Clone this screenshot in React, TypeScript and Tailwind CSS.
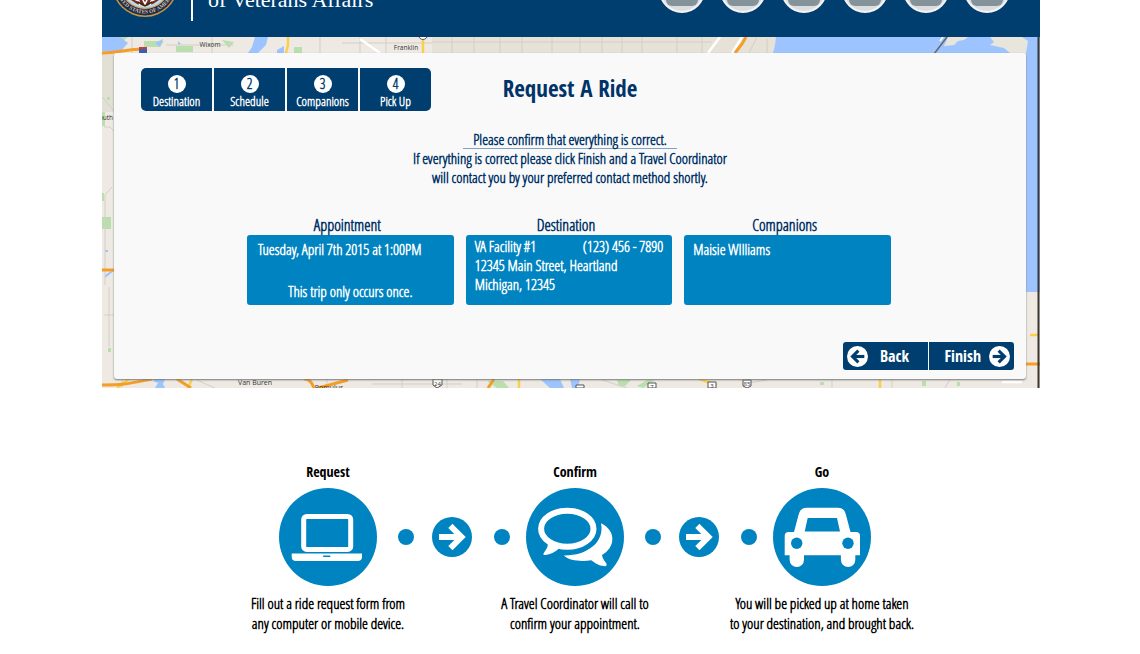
import React from "react";

const steps = ["Destination", "Schedule", "Companions", "Pick Up"];

function Arrow({ left = false, className }: { left?: boolean; className: string }) {
  return (
    <svg viewBox="0 0 40 40" className={className} aria-hidden="true">
      <circle cx="20" cy="20" r="20" fill="currentColor" />
      <g transform={left ? "rotate(180 20 20)" : undefined} className="stroke-(--arrow)" fill="none" strokeWidth="6">
        <path d="M7 20H29" strokeLinecap="butt" />
        <path d="M20.500 11L29.500 20L20.500 29" strokeLinejoin="miter" strokeLinecap="square" />
      </g>
    </svg>
  );
}

function Seal() {
  return (
    <svg viewBox="0 0 66 66" className="size-[66px] shrink-0" role="img" aria-label="Department seal">
      <defs>
        <path id="rim" d="M3.500 33A29.500 29.500 0 0 0 62.500 33" />
      </defs>
      <circle cx="33" cy="33" r="33" fill="#c8963e" />
      <circle cx="33" cy="33" r="31.5" fill="#1c2a56" />
      <circle cx="33" cy="33" r="25" fill="#d8b070" />
      <circle cx="33" cy="33" r="23.6" fill="#b9dcee" />
      <path d="M15 40l8 5 5-3 5 4 5-4 5 3 8-5-4 9-6 4-8 2-8-2-6-4z" fill="#7a2b20" />
      <path d="M22 48l5 2 1 4M44 48l-5 2-1 4M30 47l3 6 3-6" stroke="#fff" strokeWidth="1.5" fill="none" />
      <path d="M26 51l7 4 7-4" stroke="#3a2415" strokeWidth="1.5" fill="none" />
      <text fontSize="5.5" fill="#d9c08a" fontFamily="Liberation Serif, serif" fontWeight="700">
        <textPath href="#rim" startOffset="50%" textAnchor="middle">UNITED STATES OF AMERICA</textPath>
      </text>
    </svg>
  );
}

function MapBackdrop() {
  return (
    <svg viewBox="0 0 938 351" preserveAspectRatio="none" className="absolute inset-0 size-full" aria-hidden="true">
      <rect width="938" height="351" fill="#eeeae3" />
      <rect x="330" width="345" height="20" fill="#e7e2d8" />
      <rect width="12" height="75" fill="#e2dfd5" />
      <g fill="#b9dfae">
        <path d="M8 14L26 0h-8L3 12zM42 4h20l-4 6H42zM74 9h17v6H74zM120 3l12 2-5 6zM192 10h8v6h-8z" />
        <path d="M0 75h3v14H0zM5 60h3v3H5zM0 180h9v12H0zM0 156h2v8H0zM6 311h3v4H6z" />
        <path d="M385 344h16l6 7h-12zM515 343h14l-6 6h-6zM535 349l10-6h8l-12 8zM718 345h4v3h-4zM820 344h4v5h-4zM855 345h3v4h-3z" />
      </g>
      <g fill="#9ec4ff">
        <path d="M0 0h18l8 6-7 8H0zM53 6l8-4-3 8zM76 4l3 3-3 1zM153 0h13l-2 8-8 8h-10l4-6zM175 13l7-4v7h-7z" />
        <path d="M674 0h264v255l-14 9V16H671l2-8z" />
        <path d="M53 342h10l-2 5 2 4H53l3-5-5-2zM438 342h20l4 9h-14zM468 342h10l-2 9h-6zM3 238l9-6v2l-9 7zM3 213h3v2H3z" />
      </g>
      <path d="M846 0h20l-4 3-6 1-4 4-10 1zM888 0h32l6 4-2 12h-16l-6-5-14-3 4-3z" fill="#e8e5dc" />
      <path d="M832 17L845 0" stroke="#666" strokeWidth="1.5" />
      <path d="M838 4L841 0" stroke="#fff" strokeWidth="1.5" />
      <rect x="924" y="255" width="14" height="96" fill="#eeeae3" />
      <g stroke="#d3cec6" strokeWidth="1" fill="none">
        <path d="M30 0v16M64 8h68M110 0v16M218 0v16M240 6h90M258 0v16M284 0v16M330 5h280M350 0v16M372 0v16M398 0v16M420 0v16M450 0v16M478 0v16M500 0v16M520 0v16M540 0v16M575 0v16M600 0v16M655 0l-8 16M665 2v14" />
        <path d="M2 90h6l4 4M10 150L3 158v90M2 278h10M7 250v60M0 60l12 14" />
        <path d="M20 351V342M95 343l18 8M225 342v9M270 347h90M300 342v9M345 342v9M375 342v9M500 343l25 8M640 347l25-4M730 342v9M790 342v9M848 342l-5 9" />
      </g>
      <g stroke="#fff" strokeWidth="2.5" fill="none">
        <path d="M258 2l20 14M606 16l12-16M630 16l10-16M900 345h20" />
      </g>
      <g stroke="#fbce4d" strokeWidth="2.5" fill="none">
        <path d="M186 0v8l-2 8M321 3v13M15 351l12-9M90 342l-4 9M417 342v9M597 342l18 6M778 342v9M928 298h8" />
      </g>
      <g stroke="#f69d28" strokeWidth="3" fill="none">
        <path d="M0 16c18 0 20-4 45-4M644 0l-4 7-7 9M0 233h12M0 348c22 0 25-1 50-6M75 342l14 9M202 342c6 0 8 4 10 9M216 351l30-8M386 351l6-9M924 327h14" />
      </g>
      <path d="M37 10h8v6h-8z" fill="#3563ae" />
      <path d="M37 10h8v2h-8z" fill="#d73538" />
      <g fill="#fff" stroke="#555">
        <circle cx="321" cy="-2" r="4.5" />
        <path d="M331 342h9v6l-5 3-4-3zM546 346h8v5h-8zM606 345h8v6h-8zM641 343h8v6l-4 2-4-2zM474 348h8v3h-8z" />
      </g>
      <g fill="#333" fontSize="6.5" fontFamily="Open Sans, sans-serif" textAnchor="middle">
        <text x="108" y="10">Wixom</text>
        <text x="304" y="13">Franklin</text>
        <text x="153" y="348" fontSize="7">Van Buren</text>
        <text x="227" y="353" fontSize="7">Romulus</text>
        <text x="4" y="83">outh</text>
        <text x="335.500" y="349" fontSize="6">24</text>
        <text x="610" y="351" fontSize="6">3</text>
        <text x="645" y="349" fontSize="6">85</text>
        <text x="550" y="352" fontSize="6">7</text>
      </g>
      <path d="M936.500 0v351" stroke="#3a3630" strokeWidth="2" />
    </svg>
  );
}

function Stage({ title, caption, children }: { title: string; caption: string; children: React.ReactNode }) {
  return (
    <li className="flex w-[98px] shrink-0 flex-col items-center">
      <h2 className="font-['Open_Sans_Condensed',sans-serif] text-sm leading-5 font-bold">{title}</h2>
      <svg viewBox="0 0 98 98" className="mt-1.5 size-[98px]" aria-hidden="true">
        <circle cx="49" cy="49" r="49" fill="#0083c1" />
        {children}
      </svg>
      <p className="mt-[7px] text-center text-[15px] leading-5 font-bold whitespace-pre">{caption}</p>
    </li>
  );
}

function Connector() {
  return (
    <li aria-hidden="true" className="mt-[26px] flex h-[98px] w-[149px] items-center pl-[21px] text-[#0083c1] [--arrow:#fff]">
      <span className="size-4 rounded-full bg-[#0083c1]" />
      <Arrow className="mr-[22px] ml-[18px] size-10" />
      <span className="size-4 rounded-full bg-[#0083c1]" />
    </li>
  );
}

function Summary({ title, children }: { title: string; children: React.ReactNode }) {
  return (
    <section className="min-w-0 flex-1">
      <h2 className="pr-1.5 text-center text-base leading-5 font-bold">{title}</h2>
      <div className="flex h-[70px] flex-col rounded-[3px] bg-[#0083c1] px-[9px] text-[15px] leading-[19px] font-bold whitespace-nowrap text-white">
        {children}
      </div>
    </section>
  );
}

export default function App() {
  return (
    <div className="min-h-screen bg-white pl-0.5 font-['Open_Sans_Condensed_Light','Open_Sans_Condensed',sans-serif]">
      <div className="mx-auto w-full max-w-[938px]">
        <header className="flex h-[37px] items-end overflow-hidden bg-[#003e70] pl-2.5">
          <div className="mb-5"><Seal /></div>
          <div className="mb-4 ml-[13px] h-10 w-0.5 bg-white" />
          <p className="mb-[25px] ml-[15px] font-['Liberation_Serif',serif] text-[22px] leading-6 text-white">of Veterans Affairs</p>
          <nav aria-label="Social" className="mr-[30px] mb-6 ml-auto flex gap-[15px]">
            {["Home", "Profile", "Rides", "Messages", "Help", "Settings"].map((name) => (
              <a key={name} href="#" aria-label={name} className="flex size-[46px] items-end justify-center rounded-full border-2 border-[#f4f4f4] bg-[#dcdde0] pb-[5px]">
                <span className="h-6 w-8 rounded-b-md bg-[#84929a]" />
              </a>
            ))}
          </nav>
        </header>

        <main className="relative overflow-hidden pt-4 pr-3.5 pb-[9px] pl-3">
          <MapBackdrop />
          <div className="relative rounded-[3px] bg-[#f9f9f9] pt-[15px] pb-[9px] text-[#003368] shadow-[0_1px_2px_#777]">
            <div className="grid grid-cols-[1fr_auto_1fr] items-start px-[27px]">
              <nav aria-label="Steps" className="flex w-fit gap-0.5 overflow-hidden rounded-[5px]">
                {steps.map((label, i) => (
                  <button key={label} type="button" className="flex h-[43px] w-[71px] flex-col items-center bg-[#003e70] pt-[7px] text-[13px] leading-4 font-bold text-white">
                    <span className="flex size-[18px] shrink-0 items-center justify-center rounded-full bg-white text-sm text-[#003e70]">{i + 1}</span>
                    {label}
                  </button>
                ))}
              </nav>
              <h1 className="pt-1 font-['Open_Sans_Condensed',sans-serif] text-[23px] leading-8 font-bold">Request A Ride</h1>
            </div>

            <div className="mt-5 flex flex-col items-center text-center text-[15px] leading-[19px] font-bold">
              <p className="border-b border-[#7fa3c6] px-2.5 leading-[17px]">Please confirm that everything is correct.</p>
              <p>If everything is correct please click Finish and a Travel Coordinator<br />will contact you by your preferred contact method shortly.</p>
            </div>

            <div className="mx-auto mt-7 flex w-full max-w-[646px] gap-3 pr-0.5">
              <Summary title="Appointment">
                <p className="mt-[5px] pl-0.5">Tuesday, April 7th 2015 at 1:00PM</p>
                <p className="mt-[23px] text-center">This trip only occurs once.</p>
              </Summary>
              <Summary title="Destination">
                <p className="mt-0.5 flex justify-between"><span>VA Facility #1</span><span>(123) 456 - 7890</span></p>
                <p>12345 Main Street, Heartland</p>
                <p>Michigan, 12345</p>
              </Summary>
              <Summary title="Companions">
                <p className="mt-[5px]">Maisie WIlliams</p>
              </Summary>
            </div>

            <div className="mt-[37px] mr-3 flex justify-end gap-px font-['Open_Sans_Condensed',sans-serif] text-base font-bold text-white [--arrow:#003e70]">
              <button type="button" className="flex h-7 w-[85px] items-center gap-3 rounded-l-[3px] bg-[#003e70] pl-1">
                <Arrow left className="size-[21px]" />Back
              </button>
              <button type="button" className="flex h-7 w-[85px] items-center justify-end gap-2 rounded-r-[3px] bg-[#003e70] pr-1">
                Finish<Arrow className="size-[21px]" />
              </button>
            </div>
          </div>
        </main>

        <ol className="mt-[74px] flex justify-center pl-2 text-black">
          <Stage title="Request" caption={"Fill out a ride request form from\nany computer or mobile device."}>
            <rect x="24.700" y="28.400" width="47" height="33" rx="3" fill="none" stroke="#fff" strokeWidth="5" />
            <path d="M12.700 65.500H83v3.500q0 4-4.500 4H17.200q-4.500 0-4.500-4z" fill="#fff" />
            <rect x="44" y="67.500" width="7.500" height="1.500" rx=".7" fill="#0083c1" />
          </Stage>
          <Connector />
          <Stage title="Confirm" caption={"A Travel Coordinator will call to\nconfirm your appointment."}>
            <ellipse cx="41.300" cy="40.700" rx="26.200" ry="18" fill="none" stroke="#fff" strokeWidth="6" />
            <path d="M21.500 53c1.500 6-2 9-4 12.500q-.7 2 2 1.500c5-.5 9-3 13-6l-2-4z" fill="#fff" />
            <path d="M75 35.300C91 43 89 60 76 67c.5 4 3 6 4.700 9q0 3-2.500 2c-6 0-9-3-13-5.700-10 1.500-22 .5-27.500-4.800C60 68 79 55 75 35.300z" fill="#fff" />
          </Stage>
          <Connector />
          <Stage title="Go" caption={"You will be picked up at home taken\nto your destination, and brought back."}>
            <path fill="#fff" fillRule="evenodd" d="M11.700 67.300V48q0-4 4-4H21l4.500-17q1.700-7.300 8-7.300h31.500q6.500 0 8 7.300L77.500 44H83q4 0 4 4v19.300h-4.700v4.500a7.200 7.200 0 0 1-14.400 0v-4.500H31v4.500a7.200 7.200 0 0 1-14.400 0v-4.500zM34.700 30l-3 13.500H67L64 30z" />
            <circle cx="23.700" cy="55.300" r="5.700" fill="#0083c1" />
            <circle cx="75" cy="55.300" r="5.700" fill="#0083c1" />
          </Stage>
        </ol>
      </div>
    </div>
  );
}
